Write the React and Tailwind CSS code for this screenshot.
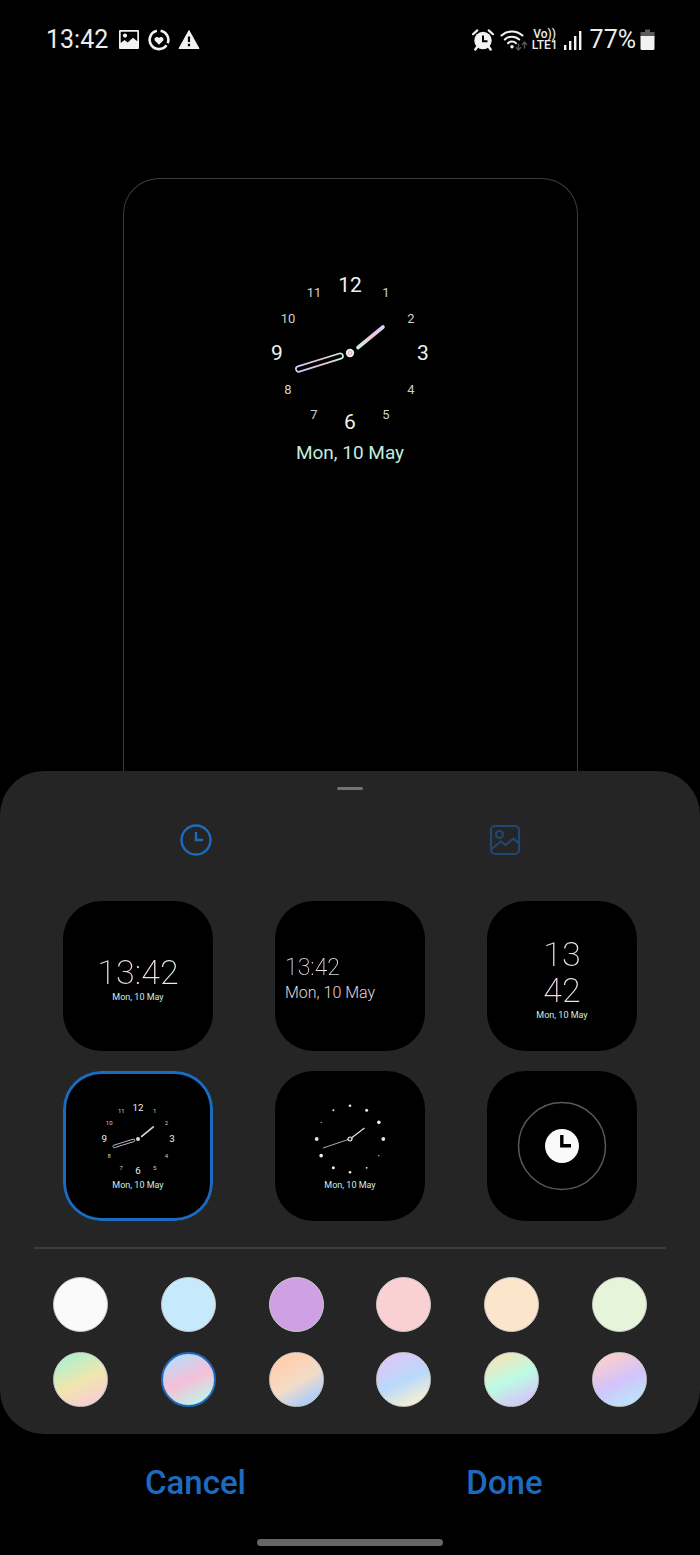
import React, { useState } from "react";

const DATE = "Mon, 10 May";

const numerals = [
  { label: "12", x: 0, y: -68, major: true },
  { label: "1", x: 36, y: -61 },
  { label: "2", x: 61, y: -35 },
  { label: "3", x: 73, y: 0, major: true },
  { label: "4", x: 61, y: 36 },
  { label: "5", x: 36, y: 61 },
  { label: "6", x: 0, y: 69, major: true },
  { label: "7", x: -36, y: 61 },
  { label: "8", x: -62, y: 36 },
  { label: "9", x: -73, y: 0, major: true },
  { label: "10", x: -62, y: -35 },
  { label: "11", x: -36, y: -61 },
];

// dot radius for each hour, starting at 12
const dotSizes = [1.3, 1.5, 1.8, 1.9, 0.6, 0.9, 1.3, 1.5, 1.8, 1.9, 0.6, 1];

const swatches = [
  { name: "White", fill: "bg-[#fafafa]" },
  { name: "Sky", fill: "bg-[#c6e9fb]" },
  { name: "Violet", fill: "bg-[#d0a0e4]" },
  { name: "Pink", fill: "bg-[#f9d1d2]" },
  { name: "Peach", fill: "bg-[#fce6cb]" },
  { name: "Lime", fill: "bg-[#e6f5da]" },
  { name: "Meadow", fill: "bg-linear-[155deg,#b4f0cc_15%,#efe6ae_52%,#f8cfd0_85%]" },
  { name: "Candy", fill: "bg-linear-[155deg,#b9dcfa_12%,#f5bfd8_50%,#c0f5ea_88%]" },
  { name: "Dusk", fill: "bg-linear-[150deg,#ffcfae_20%,#f2dcc8_55%,#aacdfc_85%]" },
  { name: "Lagoon", fill: "bg-linear-[155deg,#dcc8f8_15%,#b9d9fb_52%,#f4efd2_85%]" },
  { name: "Mint", fill: "bg-linear-[155deg,#f1e6bb_15%,#bdfbe4_50%,#d3c8f8_85%]" },
  { name: "Aurora", fill: "bg-linear-[155deg,#fbcdcf_15%,#d3c3fb_52%,#b9e6fb_88%]" },
];

function NumeralDial({ className }) {
  return (
    <svg viewBox="-84 -84 168 168" className={className} aria-hidden="true">
      <defs>
        <linearGradient id="hourHand" gradientUnits="userSpaceOnUse" x1="7" y1="-5" x2="33" y2="-26">
          <stop offset="0" stopColor="#bff3e4" />
          <stop offset="0.5" stopColor="#f3c6d8" />
          <stop offset="1" stopColor="#cfd4fb" />
        </linearGradient>
        <linearGradient id="minuteHand" gradientUnits="userSpaceOnUse" x1="7" y1="0" x2="56" y2="0">
          <stop offset="0" stopColor="#c6f3e6" />
          <stop offset="0.5" stopColor="#e6c0d6" />
          <stop offset="1" stopColor="#c3cdf8" />
        </linearGradient>
      </defs>
      {numerals.map((n) => (
        <text
          key={n.label}
          x={n.x}
          y={n.y + (n.major ? 7 : 5)}
          textAnchor="middle"
          fontSize={n.major ? 21 : 13}
          fill={n.major ? "#f0f0f0" : "#cfcfcf"}
        >
          {n.label}
        </text>
      ))}
      <path d="M8 -5.500L33 -26" stroke="url(#hourHand)" strokeWidth="3.600" strokeLinecap="round" />
      <rect
        x="7.500"
        y="-2.700"
        width="49"
        height="5.400"
        rx="2.700"
        fill="none"
        stroke="url(#minuteHand)"
        strokeWidth="1.700"
        transform="rotate(162.700)"
      />
      <circle r="4.200" fill="#f3e9f1" />
      <circle r="1.800" fill="none" stroke="#c9a3b8" strokeWidth="0.800" />
    </svg>
  );
}

function DotDial() {
  return (
    <svg viewBox="-39 -39 78 78" className="size-[78px]" aria-hidden="true">
      {dotSizes.map((r, i) => {
        const angle = (i * Math.PI) / 6;
        return (
          <circle
            key={i}
            cx={Math.sin(angle) * 33.3}
            cy={-Math.cos(angle) * 33.3}
            r={r}
            fill={i % 6 === 3 ? "#dfe0ff" : "#eeeeee"}
          />
        );
      })}
      <path d="M1.700 -1.300L14.500 -11" stroke="#e8e8e8" strokeWidth="1.200" />
      <path d="M-2 0.600L-27 9" stroke="#bdbdbd" strokeWidth="0.900" />
      <circle r="2" fill="#222" stroke="#f2f2f2" strokeWidth="1.200" />
    </svg>
  );
}

function ThinTime({ children, className }) {
  return (
    <span
      className={`bg-linear-to-r from-[#e4def6] via-[#f6d3e5] to-[#dcf7ef] bg-clip-text font-extralight text-transparent ${className}`}
    >
      {children}
    </span>
  );
}

function SmallDate() {
  return <span className="text-[9px] leading-[14px] text-[#cfeee2]">{DATE}</span>;
}

const faces = [
  {
    name: "Digital",
    align: "items-center pt-[5px]",
    body: (
      <>
        <ThinTime className="text-[34px] leading-[36px]">13:42</ThinTime>
        <SmallDate />
      </>
    ),
  },
  {
    name: "Digital, left",
    align: "items-start pt-[5px] pl-[10px]",
    body: (
      <>
        <ThinTime className="text-[23px] leading-[28px]">13:42</ThinTime>
        <span className="text-[16px] leading-[22px] font-light text-[#e0d6de]">{DATE}</span>
      </>
    ),
  },
  {
    name: "Digital, stacked",
    align: "items-center pt-[5px]",
    body: (
      <>
        <ThinTime className="text-[34px] leading-[36px]">
          13
          <br />
          42
        </ThinTime>
        <SmallDate />
      </>
    ),
  },
  {
    name: "Analogue",
    align: "items-center",
    body: (
      <>
        <NumeralDial className="size-[78px]" />
        <SmallDate />
      </>
    ),
  },
  {
    name: "Analogue, dots",
    align: "items-center",
    body: (
      <>
        <DotDial />
        <SmallDate />
      </>
    ),
  },
  {
    name: "Image clock",
    align: "items-center",
    body: (
      <svg viewBox="0 0 90 90" className="size-[90px]" aria-hidden="true">
        <circle cx="45" cy="45" r="43.500" fill="none" stroke="#585858" strokeWidth="1.500" />
        <circle cx="45" cy="45" r="17" fill="#fafafa" />
        <path d="M44.800 34V44.800H54" fill="none" stroke="#000" strokeWidth="3.400" />
      </svg>
    ),
  },
];

function StatusBar() {
  return (
    <header className="flex h-20 items-center justify-between pr-[45px] pl-[46px] text-[25px] leading-8 text-[#ececec]">
      <div className="flex items-center gap-2">
        <span className="pr-[2px]">13:42</span>
        <svg viewBox="0 0 22 22" className="size-[22px]" aria-hidden="true">
          <path
            fillRule="evenodd"
            fill="#f2f2f2"
            d="M2 1h18a1 1 0 0 1 1 1v17a1 1 0 0 1-1 1H2a1 1 0 0 1-1-1V2a1 1 0 0 1 1-1zM2.700 2.700V14L6.500 11l3.200 2.500 5.300-4.800 4.300 3.600V2.700z"
          />
          <circle cx="7" cy="6.600" r="2.100" fill="#f2f2f2" />
        </svg>
        <svg viewBox="0 0 22 22" className="size-[22px]" fill="none" aria-hidden="true">
          <path
            d="M8.800 1.800A9.300 9.300 0 1 0 18.500 16.300M19.700 14.300A9.300 9.300 0 0 0 12.600 1.700"
            stroke="#f2f2f2"
            strokeWidth="2.600"
          />
          <path d="M11 15.800L7.200 12C5 9.500 8.700 6.200 11 8.900C13.300 6.200 17 9.500 14.800 12z" fill="#f2f2f2" />
        </svg>
        <svg viewBox="0 0 22 22" className="size-[22px]" aria-hidden="true">
          <path d="M11 1.500L21 19.500H1z" fill="#f2f2f2" stroke="#f2f2f2" strokeLinejoin="round" />
          <path d="M11 7.500V13M11 14.800V17.200" stroke="#000" strokeWidth="2.200" />
        </svg>
      </div>
      <div className="flex items-center gap-1">
        <svg viewBox="0 0 24 24" className="size-6" fill="none" stroke="#f2f2f2" aria-hidden="true">
          <circle cx="12" cy="12.500" r="8.700" fill="#f2f2f2" stroke="none" />
          <path d="M2 6.200L6.300 2.400M22 6.200L17.700 2.400" strokeWidth="2.200" strokeLinecap="round" />
          <path d="M6.500 18.500L4.300 21.500M17.500 18.500L19.700 21.500" strokeWidth="2.400" strokeLinecap="round" />
          <path d="M12 7.500V13.200H16.500" stroke="#000" strokeWidth="2" />
        </svg>
        <svg viewBox="0 0 29 24" className="h-6 w-[29px]" fill="none" stroke="#f2f2f2" strokeWidth="2" aria-hidden="true">
          <path
            d="M2.500 7.500A15.500 15.500 0 0 1 23.500 7.500M5.800 11.500A10.500 10.500 0 0 1 20.200 11.500M9 15.200A5.800 5.800 0 0 1 17 15.200"
            strokeLinecap="round"
          />
          <circle cx="13" cy="18.800" r="1.700" fill="#f2f2f2" stroke="none" />
          <path
            d="M19.500 15.500V21.500M17 19.200L19.500 22L22 19.200M25.500 20.500V14.500M23 16.800L25.500 14L28 16.800"
            stroke="#555"
            strokeWidth="1.400"
          />
        </svg>
        <span className="flex flex-col items-center text-[12px] leading-[11px] font-medium">
          <span>Vo))</span>
          <span>LTE1</span>
        </span>
        <svg viewBox="0 0 22 22" className="mr-[2px] size-[22px]" fill="#f2f2f2" aria-hidden="true">
          <rect x="2" y="16" width="2.400" height="5" />
          <rect x="7" y="12" width="2.400" height="9" />
          <rect x="12" y="7" width="2.400" height="14" />
          <rect x="17" y="2" width="2.400" height="19" />
        </svg>
        <span>77%</span>
        <svg viewBox="0 0 15 22" className="h-[22px] w-[15px]" aria-hidden="true">
          <path d="M5 0.500h5v2.500h4.500v5H0.500V3H5z" fill="#5c5c5c" />
          <path d="M0.500 7h14v12.500a1.500 1.500 0 0 1-1.500 1.500H2a1.500 1.500 0 0 1-1.500-1.500z" fill="#f2f2f2" />
        </svg>
      </div>
    </header>
  );
}

export default function App() {
  const [tab, setTab] = useState("clock");
  const [face, setFace] = useState("Analogue");
  const [color, setColor] = useState("Candy");

  return (
    <div className="flex min-h-screen flex-col bg-black font-[Roboto,sans-serif] text-white">
      <StatusBar />

      <main className="flex flex-1 flex-col">
        <section className="flex flex-1 justify-center pt-[98px]">
          <div className="flex w-[65%] flex-col items-center rounded-t-[36px] border border-b-0 border-[#3c3c3c] pt-[90px] pb-20">
            <NumeralDial className="size-[168px]" />
            <p className="mt-1 text-[19px] leading-6 text-[#c3ecdf]">{DATE}</p>
          </div>
        </section>

        <section className="rounded-[44px] bg-[#252525] pt-4 pb-[27px]">
          <div className="mx-auto h-[3px] w-[26px] rounded-full bg-[#737373]" />

          <div role="tablist" className="grid h-[100px] grid-cols-2 px-[41px]">
            <button
              type="button"
              role="tab"
              aria-label="Clock style"
              aria-selected={tab === "clock"}
              onClick={() => setTab("clock")}
              className={`flex items-center justify-center text-[#1b6cc0] ${tab === "clock" ? "" : "opacity-50"}`}
            >
              <svg viewBox="0 0 32 32" className="size-8" fill="none" stroke="currentColor" aria-hidden="true">
                <circle cx="16" cy="16" r="14.500" strokeWidth="2.400" />
                <path d="M16 8V16H23" strokeWidth="2.400" />
              </svg>
            </button>
            <button
              type="button"
              role="tab"
              aria-label="Image"
              aria-selected={tab === "image"}
              onClick={() => setTab("image")}
              className={`flex items-center justify-center text-[#1b6cc0] ${tab === "image" ? "" : "opacity-50"}`}
            >
              <svg viewBox="0 0 32 32" className="size-8" fill="none" stroke="currentColor" strokeWidth="2.200" aria-hidden="true">
                <rect x="2" y="2" width="28" height="28" rx="4" />
                <circle cx="10.500" cy="10.500" r="3.500" />
                <path d="M2.500 25L12 17.500L16.500 21L24.500 14.500L29.500 19" strokeLinejoin="round" />
              </svg>
            </button>
          </div>

          <div className="mt-[11px] grid grid-cols-3 gap-x-[62px] gap-y-5 px-[63px]">
            {faces.map((f) => (
              <button
                key={f.name}
                type="button"
                aria-label={f.name}
                aria-pressed={face === f.name}
                onClick={() => setFace(f.name)}
                className={`flex aspect-square flex-col justify-center rounded-[38px] bg-black ${f.align} ${
                  face === f.name ? "ring-3 ring-[#1b6cc0] ring-inset" : ""
                }`}
              >
                {f.body}
              </button>
            ))}
          </div>

          <hr className="mx-[34px] mt-[26px] border-t-2 border-[#3d3d3d]" />

          <div className="mt-7 grid grid-cols-[repeat(6,55px)] justify-between gap-y-5 px-[53px]">
            {swatches.map((s) => (
              <input
                key={s.name}
                type="radio"
                name="color"
                value={s.name}
                aria-label={s.name}
                checked={color === s.name}
                onChange={() => setColor(s.name)}
                className={`size-[55px] cursor-pointer appearance-none rounded-full bg-origin-border ${s.fill} ${
                  color === s.name ? "border-2 border-[#1b6cc0]" : "border border-[#c9c9c9]"
                }`}
              />
            ))}
          </div>
        </section>
      </main>

      <footer>
        <div className="grid h-[98px] grid-cols-2 px-[41px] text-[33px] leading-10 font-medium text-[#1b6cc0]">
          <button type="button">Cancel</button>
          <button type="button">Done</button>
        </div>
        <div className="mx-auto mt-[7px] mb-[9px] h-[7px] w-[186px] rounded-full bg-[#666]" />
      </footer>
    </div>
  );
}
